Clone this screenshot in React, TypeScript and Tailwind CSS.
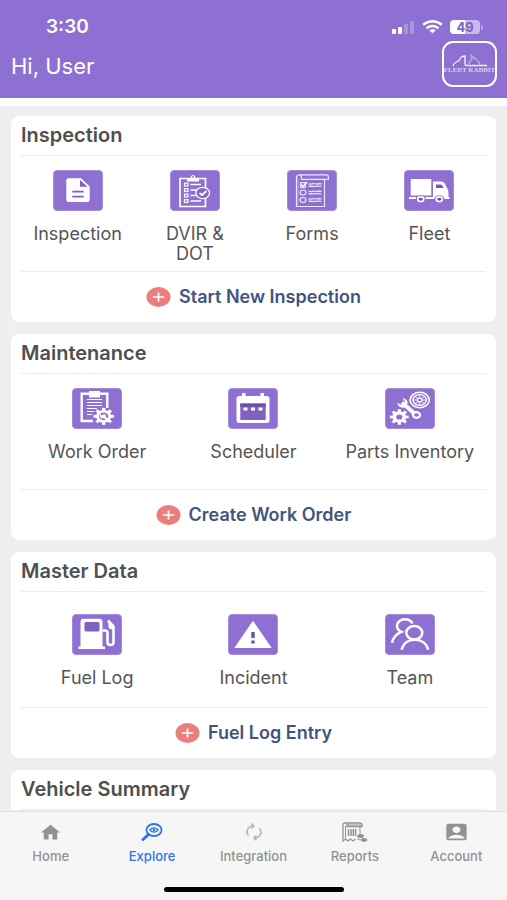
import React from 'react';
import { MdAccountBox, MdHome } from 'react-icons/md';

type Item = { label: string; icon: React.ReactNode };

const GEAR_ANGLES = [0, 45, 90, 135, 180, 225, 270, 315];

const Gear = ({ cx, cy, r, hole }: { cx: number; cy: number; r: number; hole: number }) => (
  <g transform={`translate(${cx} ${cy}) scale(1.2 1)`}>
    {GEAR_ANGLES.map((angle) => (
      <rect
        key={angle}
        x={-r * 0.17}
        y={-r}
        width={r * 0.34}
        height={r * 0.5}
        fill="#fff"
        transform={`rotate(${angle})`}
      />
    ))}
    <circle r={(r * 0.74 + hole) / 2} fill="none" stroke="#fff" strokeWidth={r * 0.74 - hole} />
  </g>
);

const Tile = ({ children }: { children: React.ReactNode }) => (
  <svg
    className="w-[50px] h-[41px] rounded-[4px] bg-[#8d70d1] border border-[#a48cdb]"
    viewBox="1 1 48 39"
    fill="none"
    aria-hidden="true"
  >
    {children}
  </svg>
);

const InspectionIcon = () => (
  <Tile>
    <path d="M15.5 8.3H28l8.7 8.2V30a2.2 2 0 0 1-2.2 2h-19a2.2 2 0 0 1-2.2-2V10.3a2.2 2 0 0 1 2.2-2z" fill="#fff" />
    <path d="M27 10v6.7h7.5z" fill="#7f62c0" />
    <path d="M19.3 21.7h11.4M19.3 26.7h11.4" stroke="#7f62c0" strokeWidth="1.8" />
  </Tile>
);

const DvirIcon = () => (
  <Tile>
    <path d="M35.5 18V8.5H10v28h25.5V28" stroke="#fff" strokeWidth="1.7" />
    <path d="M17 11.5V8h3.5c.5-4 4.500-4 5 0H29v3.500z" fill="#fff" />
    <circle cx="23" cy="7" r="0.9" fill="#8d70d1" />
    {[14.5, 20, 25.5, 31].map((y) => (
      <g key={y} stroke="#fff">
        <rect x="14.5" y={y - 1.3} width="3.4" height="2.8" strokeWidth="1.2" />
        <path d={`M20.5 ${y}H${y < 18 || y > 30 ? 31 : 27}`} strokeWidth="1.4" />
      </g>
    ))}
    <ellipse cx="32.7" cy="23" rx="6.8" ry="5.7" fill="#8365c6" stroke="#fff" strokeWidth="1.3" />
    <path d="M29.5 23l2.500 2 4.500-4" stroke="#fff" strokeWidth="1.8" />
  </Tile>
);

const FormsIcon = () => (
  <Tile>
    <g stroke="#eee6ff" strokeWidth="1.2">
      <path d="M12.5 4.800H39q2.500 0 2.500 2.500v2H14.500V7.500q0-2.700-2-2.700-3 0-3 3V36.500h28V9.500" />
      {[15, 22.5, 30].map((y, i) => (
        <g key={y}>
          {i === 0 ? (
            <rect x="13.5" y="12.7" width="4.8" height="4.8" />
          ) : (
            <ellipse cx="16" cy={y} rx="2.9" ry="2.5" />
          )}
          <path d={`M21.5 ${y - 1.2}l3 .3 2-.6 3 .5 2-.4 3 .2M21.5 ${y + 1.4}l2.500-.3 3 .4 2.500-.5 5 .4`} />
        </g>
      ))}
    </g>
    <path d="M14 14.5l2 2 4-4.500" stroke="#fff" strokeWidth="1.5" />
    <path d="M11 8v27" stroke="#c9b8ee" strokeWidth=".8" />
  </Tile>
);

const FleetIcon = () => (
  <Tile>
    <path d="M6.7 9h20.600v16.500H6.700zM5 27h40.500v2H5zM29 11.500h7.500q3.500 0 4.500 2.500l2.500 5q1 1.500 1 4V28H29z" fill="#fff" />
    <path d="M32 14.5h4.500q1.500 0 2.200 1.500l.9 2H32z" fill="#7557b7" />
    {[16.7, 35.3].map((x) => (
      <g key={x}>
        <ellipse cx={x} cy="29.2" rx="5" ry="4" fill="#8d70d1" />
        <ellipse cx={x} cy="29.2" rx="3" ry="2.3" fill="#6d50ae" stroke="#fff" strokeWidth="1.7" />
      </g>
    ))}
  </Tile>
);

const WorkOrderIcon = () => (
  <Tile>
    <path d="M21 33H9.700V5.700h25.600V20" stroke="#fff" strokeWidth="2.4" />
    <path d="M17 3h11v6.500H17z" fill="#fff" />
    <path d="M15 11.5h15M15 14.500h15M15 17.500h15M15 20.500h10M15 23.500h7M15 26.500h5" stroke="#fff" strokeWidth="1.2" />
    <Gear cx={31.7} cy={28.3} r={8.5} hole={3.9} />
    <path d="M30.5 27l6 6" stroke="#fff" strokeWidth="2.2" />
    <path d="M29 25.5a3 2.600 0 1 0 4 .4l-1.800 1.700-2-.4z" fill="#fff" />
  </Tile>
);

const SchedulerIcon = () => (
  <Tile>
    <path d="M14 5h3.500v3h15V5H36v3h2.500q3 0 3 2.500v22q0 2.500-3 2.500h-27q-3 0-3-2.500v-22Q8.500 8 11.500 8H14z" fill="#fff" />
    <path d="M12.3 15.500h25.400v16q0 .5-.7.500h-24q-.7 0-.7-.5z" fill="#8062bf" />
    <path d="M12.3 15.500h25.400V19H12.300z" fill="#6c50aa" />
    <path d="M15.5 19.500h4v3h-4zM23 19.500h4v3h-4zM30.500 19.500h4v3h-4z" fill="#fff" />
  </Tile>
);

const PartsIcon = () => (
  <Tile>
    <Gear cx={14.3} cy={29} r={7.8} hole={2.6} />
    <path d="M17 14.5l13.500 12" stroke="#fff" strokeWidth="4" />
    <path d="M12.5 14.500c0 4 4 6.500 8 4.500l1.800-3c1-3-1-5.500-5-5.500l3 3-1.500 2.500-3.300.8z" fill="#fff" />
    <ellipse cx="31.5" cy="27" rx="3.6" ry="2.8" stroke="#fff" strokeWidth="2.2" fill="#8d70d1" />
    <g stroke="#fff">
      <ellipse cx="34.7" cy="12" rx="9.6" ry="7.7" strokeWidth="1.6" />
      <ellipse cx="34.7" cy="12" rx="6.8" ry="5.4" strokeWidth="1.4" />
      <ellipse cx="34.7" cy="12" rx="2.3" ry="1.9" strokeWidth="1.2" />
      <path d="M34.7 6.500v3.400M34.700 14v3.500M28 12h4M37 12h4.500M30 8.500l3 2M36.500 13.500l3 2.300M39.500 8.500l-3 2M33 13.500l-3 2.300" strokeWidth=".9" />
    </g>
  </Tile>
);

const FuelIcon = () => (
  <Tile>
    <path d="M8.5 32.500V8q0-3.300 3.500-3.300h15q3.500 0 3.500 3.300v24.500h2.500V35H6.500v-2.500z" fill="#fff" />
    <rect x="12.5" y="8" width="15" height="9.5" rx="1.5" fill="#7f61c0" />
    <path d="M30.5 16.500H33q2.500 0 2.500 2.500v9q0 3 3 3t3-3V12.500L36 6.500" stroke="#fff" strokeWidth="2.6" />
    <path d="M36.5 8.500v4.500q0 2.500 5 2.500v-5z" fill="#fff" />
  </Tile>
);

const IncidentIcon = () => (
  <Tile>
    <path d="M25 6.700L43.700 34H6.300z" fill="#fff" />
    <path d="M23.3 18h3.400v6h-3.400zM23.300 26.500h3.400v3h-3.400z" fill="#6c50aa" />
  </Tile>
);

const TeamIcon = () => (
  <Tile>
    <g stroke="#fff" strokeWidth="2.5">
      <path d="M27.5 9.500C26 6.500 23 5.300 20 5.300c-4.500 0-8 3-8 6.500 0 3 1.500 4.800 4.500 6C11 20 8 23.500 7 28.800" />
      <ellipse cx="29.3" cy="18.7" rx="8" ry="6.7" />
      <path d="M16.7 35.800C18 29.500 23 25.700 29.800 25.700S41.800 29.500 43.200 35.800" />
    </g>
  </Tile>
);

const ExploreIcon = () => (
  <svg className="w-[22px] h-[18px]" viewBox="0 0 22 18" fill="none" stroke="currentColor" aria-hidden="true">
    <ellipse cx="13" cy="7" rx="7.6" ry="6" strokeWidth="1.8" />
    <path d="M7.5 11.500l-5.500 5" strokeWidth="3" strokeLinecap="round" />
    <path d="M8.8 7q4.200-4.400 8.400 0-4.200 4.400-8.400 0z" strokeWidth="1.2" />
    <circle cx="13" cy="7" r="1.3" fill="currentColor" stroke="none" />
  </svg>
);

const IntegrationIcon = () => (
  <svg className="w-[20px] h-[18px] text-[#b5b5b5]" viewBox="0 0 20 18" fill="none" stroke="currentColor" strokeWidth="1.6" aria-hidden="true">
    <path d="M4.6 12.800C1.300 9 3.500 3 9.500 3M15.400 5.200C18.700 9 16.500 15 10.500 15" />
    <path d="M7.5 .7L10 3 7.500 5.300M12.500 12.700L10 15l2.500 2.300" />
  </svg>
);

const ReportsIcon = () => (
  <svg className="w-[26px] h-[20px]" viewBox="0 0 26 20" fill="none" stroke="currentColor" aria-hidden="true">
    <path d="M3 1h15q2 0 2 2v1.500H5V3Q5 1 3 1T1 3v16l2.500-2L6 19l2.500-2 2.500 2 2.500-2" strokeWidth="1.3" />
    <path d="M5 3h14M3.500 4v12M18 5v7" strokeWidth="1" />
    <path d="M6.500 7v7M9 7v7M11.3 7v7M13.6 7v7" strokeWidth="1.5" />
    <ellipse cx="18.5" cy="14" rx="3" ry="1.4" fill="currentColor" />
    <ellipse cx="18.5" cy="16.5" rx="3" ry="1.4" strokeWidth="1" />
    <ellipse cx="22.3" cy="18" rx="2.7" ry="1.4" fill="currentColor" />
  </svg>
);

const PlusIcon = () => (
  <svg className="w-[25px] h-[20px] shrink-0" viewBox="0 0 25 20" aria-hidden="true">
    <ellipse cx="12.5" cy="10" rx="12" ry="10" fill="#ea7e7a" />
    <path d="M12.5 5.500v9M6.800 10h11.400" stroke="#fff" strokeWidth="1.7" />
  </svg>
);

const SignalIcon = () => (
  <svg className="w-[23px] h-[14px]" viewBox="0 0 23 14" fill="#fff" aria-hidden="true">
    <rect x="0" y="9" width="4" height="5" rx="1" />
    <rect x="6" y="7" width="4" height="7" rx="1" />
    <rect x="12" y="4" width="4" height="10" rx="1" opacity=".25" />
    <rect x="18" y="1" width="4" height="13" rx="1" opacity=".25" />
  </svg>
);

const WifiIcon = () => (
  <svg className="w-[21px] h-[14px]" viewBox="0 0 21 14" fill="none" stroke="#fff" strokeWidth="2.4" aria-hidden="true">
    <path d="M1.2 4.800q9.300-7 18.600 0M4.500 8.200q6-4.400 12 0" />
    <path d="M10.5 13.200l-3.300-2.900q3.300-2.200 6.600 0z" fill="#fff" stroke="none" />
  </svg>
);

const Battery = () => (
  <div className="flex items-center">
    <span className="flex h-[14px] w-[30px] items-center justify-center rounded-[4px] bg-linear-to-r from-white from-50% to-[#cbb9ee] to-50% text-[13px] leading-[14px] font-bold text-[#7c61bd]">
      49
    </span>
    <span className="ml-px h-[5px] w-[2px] rounded-r-full bg-[#b8a3e6]" />
  </div>
);

const CompanyLogo = () => (
  <button
    aria-label="Company profile"
    className="flex h-[46px] w-[55px] flex-col items-center justify-center overflow-hidden rounded-[11px] border-2 border-white"
  >
    <svg className="h-[13px] w-[38px]" viewBox="0 0 38 13" fill="none" aria-hidden="true">
      <path d="M2 12c1-4 5-3 7-7 1-2 3-3 5-3v8q0 1.500 2 1.500h20" stroke="#f1ecfa" strokeWidth="1.4" />
      <path d="M4 12c0-4 4-3 5-1M10 4l3 1" stroke="#6f6686" strokeWidth="1" />
      <path d="M18 10c0-3 2-4 3-5l-1-4 3 3c3 0 2 3 5 4l1 3" stroke="#beb4d2" strokeWidth="1.3" />
      <path d="M20 11c1-3 4-3 6 0" stroke="#756b90" strokeWidth=".9" />
    </svg>
    <span className="font-['Liberation_Serif',serif] text-[7px] leading-[7px] font-bold whitespace-nowrap text-[#d9d0e8]">
      FLEET RABBIT
    </span>
  </button>
);

const Header = () => (
  <header className="shrink-0 border-b-8 border-white bg-[#8d70d1] pb-[11px] text-white">
    <div className="flex justify-between pt-[13px] pr-6 pl-[46px]">
      <span className="text-[19px] leading-[28px] font-semibold">3:30</span>
      <div className="flex items-center gap-[7px]">
        <SignalIcon />
        <WifiIcon />
        <Battery />
      </div>
    </div>
    <div className="flex items-center justify-between pr-[10px] pl-[11px]">
      <h1 className="pt-1 text-[22px] leading-[28px]">Hi, User</h1>
      <CompanyLogo />
    </div>
  </header>
);

const SectionTitle = ({ children }: { children: React.ReactNode }) => (
  <h2 className="mx-[10px] border-b border-[#ececec] text-[20px] leading-[39px] font-semibold text-[#4f4f4f]">
    {children}
  </h2>
);

type SectionProps = { title: string; items: Item[]; action: string; roomy?: boolean };

const Section = ({ title, items, action, roomy }: SectionProps) => (
  <section className="rounded-lg bg-white">
    <SectionTitle>{title}</SectionTitle>
    <div className={`mx-2 flex min-h-[115px] ${roomy ? 'pt-[22px]' : 'pt-[14px]'}`}>
      {items.map(({ label, icon }) => (
        <button
          key={label}
          className="flex flex-1 flex-col items-center gap-[13px] text-[18px] leading-[20px] text-[#555]"
        >
          {icon}
          <span className="max-w-[140px]">
            {label.split('\n').map((line) => (
              <span key={line} className="block">
                {line}
              </span>
            ))}
          </span>
        </button>
      ))}
    </div>
    <div className="mx-[10px] flex h-[51px] items-center justify-center border-t border-[#ececec]">
      <button className="flex items-center gap-2 text-[18px] leading-[20px] font-semibold text-[#42547e]">
        <PlusIcon />
        {action}
      </button>
    </div>
  </section>
);

const inspection: Item[] = [
  { label: 'Inspection', icon: <InspectionIcon /> },
  { label: 'DVIR &\nDOT', icon: <DvirIcon /> },
  { label: 'Forms', icon: <FormsIcon /> },
  { label: 'Fleet', icon: <FleetIcon /> },
];

const maintenance: Item[] = [
  { label: 'Work Order', icon: <WorkOrderIcon /> },
  { label: 'Scheduler', icon: <SchedulerIcon /> },
  { label: 'Parts Inventory', icon: <PartsIcon /> },
];

const masterData: Item[] = [
  { label: 'Fuel Log', icon: <FuelIcon /> },
  { label: 'Incident', icon: <IncidentIcon /> },
  { label: 'Team', icon: <TeamIcon /> },
];

const tabs: Item[] = [
  { label: 'Home', icon: <MdHome className="h-[21px] w-[23px]" preserveAspectRatio="none" /> },
  { label: 'Explore', icon: <ExploreIcon /> },
  { label: 'Integration', icon: <IntegrationIcon /> },
  { label: 'Reports', icon: <ReportsIcon /> },
  { label: 'Account', icon: <MdAccountBox className="h-[22px] w-[27px]" preserveAspectRatio="none" /> },
];

const TabBar = () => (
  <nav className="flex shrink-0 flex-col items-center border-t border-[#dedede] bg-[#f6f6f6] pt-[10px] pb-2">
    <div className="flex w-full">
      {tabs.map(({ label, icon }) => (
        <a
          key={label}
          href={`#${label.toLowerCase()}`}
          className={`flex flex-1 flex-col items-center gap-[6px] text-[13px] leading-[16px] font-medium ${
            label === 'Explore' ? 'text-[#2f74ec]' : 'text-[#929292]'
          }`}
        >
          <span className="flex h-[20px] items-center">{icon}</span>
          {label}
        </a>
      ))}
    </div>
    <div className="mt-[23px] h-[5px] w-[180px] rounded-full bg-black" />
  </nav>
);

export default function App() {
  return (
    <div className="flex h-screen flex-col bg-[#efefef] font-['Inter',sans-serif]">
      <Header />
      <main className="flex min-h-0 flex-1 flex-col gap-3 overflow-hidden px-[11px] pt-[10px]">
        <Section title="Inspection" items={inspection} action="Start New Inspection" />
        <Section title="Maintenance" items={maintenance} action="Create Work Order" />
        <Section title="Master Data" items={masterData} action="Fuel Log Entry" roomy />
        <section className="rounded-t-lg bg-white">
          <SectionTitle>Vehicle Summary</SectionTitle>
        </section>
      </main>
      <TabBar />
    </div>
  );
}
